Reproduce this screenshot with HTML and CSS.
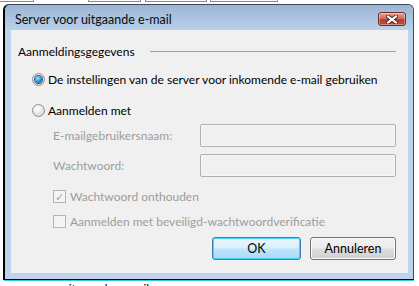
FILE: index.html
```html
<!DOCTYPE html>
<html lang="nl">
  <head>
    <meta charset="UTF-8" />
    <title>Server voor uitgaande e-mail</title>
    <link rel="stylesheet" href="styles.css">
  </head>
  <body>
    <!-- dialog underneath -->
    <div class="back-tabs">
      <span class="back-tab tab-a"></span>
      <span class="back-tab tab-b"></span>
      <span class="back-tab tab-c"></span>
      <span class="back-tab tab-d"></span>
    </div>
    <div class="back-text">uitgaande e-mail</div>

    <div class="window">
      <div class="titlebar">
        <span class="title">Server voor uitgaande e-mail</span>
        <button class="close" type="button" aria-label="Sluiten">
          <svg width="12" height="9" viewBox="0 0 12 9">
            <path d="M2 1.5 L10 7.5 M10 1.5 L2 7.5" stroke="#4a2a26" stroke-width="4" stroke-linecap="square" fill="none"/>
            <path d="M2 1.5 L10 7.5 M10 1.5 L2 7.5" stroke="#ffffff" stroke-width="2" stroke-linecap="square" fill="none"/>
          </svg>
        </button>
      </div>

      <div class="panel">
        <div class="group-title">
          <span>Aanmeldingsgegevens</span>
          <span class="group-line"></span>
        </div>

        <label class="option first">
          <span class="radio checked"></span>
          <span>De instellingen van de server voor inkomende e-mail gebruiken</span>
        </label>

        <label class="option second">
          <span class="radio"></span>
          <span>Aanmelden met</span>
        </label>

        <div class="field first">
          <span class="field-label">E-mailgebruikersnaam:</span>
          <span class="field-input"></span>
        </div>
        <div class="field second">
          <span class="field-label">Wachtwoord:</span>
          <span class="field-input"></span>
        </div>

        <label class="check first">
          <span class="box">&#10003;</span>
          <span>Wachtwoord onthouden</span>
        </label>
        <label class="check second">
          <span class="box"></span>
          <span>Aanmelden met beveiligd-wachtwoordverificatie</span>
        </label>

        <div class="buttons">
          <button class="btn default" type="button">OK</button>
          <button class="btn" type="button">Annuleren</button>
        </div>
      </div>
    </div>
  </body>
</html>
```

FILE: styles.css
```css
/* Page and the dialog behind */
body {
  margin: 0;
  width: 419px;
  height: 286px;
  overflow: hidden;
  position: relative;
  background: #fff;
  font-family: Lato, "Noto Sans", sans-serif;
  font-size: 12px;
  color: #000;
  white-space: nowrap;
}

.back-tabs {
  height: 4px;
  overflow: hidden;
  position: relative;
}

.back-tab {
  position: absolute;
  top: -14px;
  height: 16px;
  border: 1px solid #8c8c8c;
  box-sizing: border-box;
  background: #fbfbfb;
}

.tab-a { left: -40px; width: 74px; }
.tab-b { left: 88px; width: 53px; }
.tab-c { left: 145px; width: 62px; }
.tab-d { left: 210px; width: 68px; }

.back-text {
  position: absolute;
  left: 62px;
  top: 281px;
  line-height: 16px;
}

/* Window frame */
.window {
  position: absolute;
  left: 4px;
  top: 4px;
  width: 410px;
  height: 276px;
  box-sizing: border-box;
  border: 1px solid #3d4b5c;
  border-left-color: #000;
  border-bottom-color: #000;
  border-radius: 6px 6px 0 0;
  background: #bdd4ec;
  box-shadow: 0 1px 0 #33ccdd, -1px 0 0 #000;
  display: flex;
  flex-direction: column;
}

.titlebar {
  height: 25px;
  flex: none;
  display: flex;
  justify-content: space-between;
  align-items: flex-start;
  padding: 0 7px 0 10px;
  border-radius: 5px 5px 0 0;
  background: linear-gradient(#9bb5d3, #bad1ea);
}

.title {
  margin-top: 8px;
  line-height: 14px;
  font-size: 12.5px;
  color: #0a0a0a;
}

.close {
  margin-top: 7px;
  width: 28px;
  height: 14px;
  padding: 0;
  border: 1px solid #6e2e26;
  border-radius: 3px;
  background: linear-gradient(#e7a394, #d1705f 45%, #b63b2a 55%, #c0503c);
  box-shadow: inset 0 0 0 1px rgba(255, 255, 255, 0.35);
  display: flex;
  align-items: center;
  justify-content: center;
}

/* Gray client area */
.panel {
  flex: 1;
  margin: 0 5px 6px 6px;
  padding: 13px 12px 0 7px;
  background: #f0f0f0;
}

.group-title {
  display: flex;
  align-items: center;
  height: 16px;
}

.group-line {
  flex: 1;
  height: 1px;
  margin-left: 15px;
  margin-top: 1px;
  background: #a0a0a0;
}

.option,
.check {
  display: flex;
  align-items: center;
  height: 16px;
}

.option { padding-left: 14px; }
.option.first { margin-top: 12px; }
.option.second { margin-top: 15px; }

.radio {
  flex: none;
  width: 13px;
  height: 13px;
  box-sizing: border-box;
  margin-right: 3px;
  border: 1px solid #8f8f8f;
  border-radius: 50%;
  background: radial-gradient(circle at 40% 35%, #ffffff, #e4e4e4 55%, #cfcfcf);
  display: flex;
  align-items: center;
  justify-content: center;
}

.radio.checked::after {
  content: "";
  width: 7px;
  height: 7px;
  border-radius: 50%;
  background: radial-gradient(circle at 40% 35%, #9fe4ff, #2c86c6 55%, #0c4a80);
  box-shadow: 0 0 0 1px #1f5d8f;
}

.field {
  display: flex;
  align-items: center;
  padding-left: 35px;
  color: #9d9d9d;
}

.field.first { margin-top: 6px; }
.field.second { margin-top: 7px; }

.field-label {
  flex: none;
  width: 147px;
}

.field-input {
  flex: none;
  width: 196px;
  height: 23px;
  box-sizing: border-box;
  border: 1px solid #afafaf;
  border-radius: 2px;
  box-shadow: inset 0 0 0 1px #f7f7f7;
  background: #f0f0f0;
}

.check {
  padding-left: 35px;
  color: #9d9d9d;
}

.check.first { margin-top: 11px; }
.check.second { margin-top: 9px; }

.box {
  flex: none;
  width: 13px;
  height: 13px;
  box-sizing: border-box;
  margin-right: 4px;
  border: 1px solid #b4b4b4;
  background: #f4f4f4;
  font-size: 11px;
  line-height: 11px;
  text-align: center;
  color: #a5a5a5;
}

.buttons {
  display: flex;
  justify-content: flex-end;
  gap: 9px;
  margin-top: 8px;
}

.btn {
  width: 86px;
  height: 23px;
  padding: 0;
  font-family: inherit;
  font-size: 12.5px;
  color: #000;
  border: 1px solid #707070;
  border-radius: 3px;
  background: linear-gradient(#f2f2f2, #ebebeb 48%, #dddddd 52%, #cfcfcf);
  box-shadow: inset 0 0 0 1px #fcfcfc;
}

.btn.default {
  width: 89px;
  border-color: #3c7fb1;
  background: linear-gradient(#eaf6fd, #d9f0fc 48%, #bee6fd 52%, #a7d9f5);
  box-shadow: inset 0 0 0 1px #48d4f8;
}
```
